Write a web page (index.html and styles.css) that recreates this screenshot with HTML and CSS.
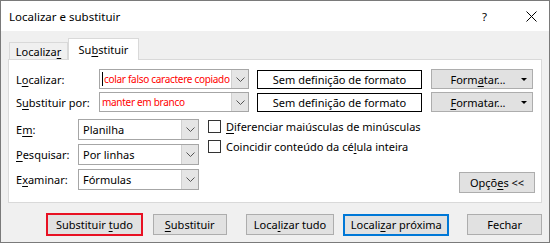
FILE: index.html
```html
<!DOCTYPE html>
<html lang="pt">
<head>
    <meta charset="UTF-8">
    <title>Localizar e substituir</title>
    <link rel="stylesheet" href="styles.css">
</head>
<body>
    <div class="window">
        <div class="titlebar">
            <span class="title">Localizar e substituir</span>
            <span class="help">?</span>
            <span class="close">
                <svg width="11" height="11" viewBox="0 0 11 11"><path d="M0.5 0.5 L10.5 10.5 M10.5 0.5 L0.5 10.5" stroke="#000" stroke-width="1" fill="none"/></svg>
            </span>
        </div>
        <div class="dialog-body">
            <div class="tabs">
                <div class="tab"><span>Localiza<u>r</u></span></div>
                <div class="tab active"><span>Su<u>b</u>stituir</span></div>
            </div>
            <div class="panel">
                <div class="find-row">
                    <label class="row-label">L<u>o</u>calizar:</label>
                    <div class="combo">
                        <span class="combo-text"><span class="caret"></span>colar falso caractere copiado</span>
                        <span class="combo-btn"><svg width="9" height="5" viewBox="0 0 9 5"><polyline points="0.5,0.5 4.5,4.5 8.5,0.5" stroke="#555" fill="none"/></svg></span>
                    </div>
                    <div class="format-box">Sem definição de formato</div>
                    <div class="btn format-btn"><span>Form<u>a</u>tar...</span><span class="tri"></span></div>
                </div>
                <div class="find-row">
                    <label class="row-label">S<u>u</u>bstituir por:</label>
                    <div class="combo">
                        <span class="combo-text">manter em branco</span>
                        <span class="combo-btn"><svg width="9" height="5" viewBox="0 0 9 5"><polyline points="0.5,0.5 4.5,4.5 8.5,0.5" stroke="#555" fill="none"/></svg></span>
                    </div>
                    <div class="format-box">Sem definição de formato</div>
                    <div class="btn format-btn"><span><u>F</u>ormatar...</span><span class="tri"></span></div>
                </div>
                <div class="options">
                    <div class="selects">
                        <div class="select-row">
                            <label class="sel-label">E<u>m</u>:</label>
                            <div class="select"><span class="select-text">Planilha</span><span class="select-btn"><svg width="9" height="5" viewBox="0 0 9 5"><polyline points="0.5,0.5 4.5,4.5 8.5,0.5" stroke="#555" fill="none"/></svg></span></div>
                        </div>
                        <div class="select-row">
                            <label class="sel-label"><u>P</u>esquisar:</label>
                            <div class="select"><span class="select-text">Por linhas</span><span class="select-btn"><svg width="9" height="5" viewBox="0 0 9 5"><polyline points="0.5,0.5 4.5,4.5 8.5,0.5" stroke="#555" fill="none"/></svg></span></div>
                        </div>
                        <div class="select-row">
                            <label class="sel-label">E<u>x</u>aminar:</label>
                            <div class="select"><span class="select-text">Fórmulas</span><span class="select-btn"><svg width="9" height="5" viewBox="0 0 9 5"><polyline points="0.5,0.5 4.5,4.5 8.5,0.5" stroke="#555" fill="none"/></svg></span></div>
                        </div>
                    </div>
                    <div class="checks">
                        <div class="check"><span class="box"></span><span><u>D</u>iferenciar maiúsculas de minúsculas</span></div>
                        <div class="check"><span class="box"></span><span>Coincidir conteúdo da cé<u>l</u>ula inteira</span></div>
                        <div class="btn options-btn"><span>Opçõ<u>e</u>s &lt;&lt;</span></div>
                    </div>
                </div>
            </div>
            <div class="actions">
                <div class="btn act replace-all"><span>Substituir <u>t</u>udo</span></div>
                <div class="btn act replace"><span><u>S</u>ubstituir</span></div>
                <div class="btn act find-all"><span>Loca<u>l</u>izar tudo</span></div>
                <div class="btn act find-next"><span>Locali<u>z</u>ar próxima</span></div>
                <div class="btn act close-btn"><span>Fechar</span></div>
            </div>
        </div>
    </div>
</body>
</html>
```

FILE: styles.css
```css
body {
    margin: 0;
    font-family: "Noto Sans", sans-serif;
    font-size: 11px;
    color: #000;
}

u {
    text-decoration-thickness: 1px;
    text-underline-offset: 2px;
}

.window {
    width: 548px;
    height: 241px;
    border: 1px solid #7a7a7a;
    background-color: #f0f0f0;
}

.titlebar {
    height: 30px;
    background-color: #fff;
    display: flex;
    align-items: center;
    font-size: 11.5px;
}

.title {
    margin-left: 8px;
    flex: 1;
}

.help {
    width: 12px;
    margin-right: 32px;
}

.close {
    display: flex;
    margin-right: 12px;
}

.dialog-body {
    padding: 7px 7px 0 7px;
}

.tabs {
    display: flex;
    align-items: flex-end;
    height: 21px;
    margin-left: 1px;
}

.tab {
    box-sizing: border-box;
    width: 59px;
    height: 17px;
    line-height: 17px;
    text-align: center;
    border: 1px solid #d9d9d9;
    border-bottom: none;
    background-color: #f0f0f0;
    white-space: nowrap;
}

.tab.active {
    width: 71px;
    height: 22px;
    line-height: 21px;
    background-color: #fff;
    margin-bottom: -1px;
    position: relative;
}

.panel {
    height: 133px;
    border: 1px solid #d9d9d9;
    background-color: #fff;
    padding: 9px 6px 0 7px;
}

.find-row {
    display: flex;
    align-items: center;
    height: 20px;
    margin-bottom: 3px;
}

.row-label {
    width: 83px;
}

.combo {
    width: 148px;
    height: 18px;
    border: 1px solid #a6a6a6;
    display: flex;
    align-items: center;
    margin-right: 8px;
}

.combo-text {
    flex: 1;
    color: #f00;
    font-size: 10px;
    letter-spacing: -0.3px;
    padding-left: 2px;
    display: flex;
    align-items: center;
    white-space: nowrap;
    overflow: hidden;
}

.caret {
    width: 1px;
    height: 14px;
    background-color: #000;
    margin-right: 1px;
}

.combo-btn,
.select-btn {
    width: 16px;
    height: 100%;
    background-color: #e5e5e5;
    border-left: 1px solid #d0d0d0;
    display: flex;
    align-items: center;
    justify-content: center;
}

.format-box {
    width: 163px;
    height: 17px;
    border: 1.5px solid #000;
    display: flex;
    align-items: center;
    justify-content: center;
    margin-right: 9px;
}

.btn {
    background-color: #e1e1e1;
    border: 1px solid #adadad;
    display: flex;
    align-items: center;
    justify-content: center;
    box-sizing: border-box;
    white-space: nowrap;
}

.format-btn {
    width: 102px;
    height: 20px;
    position: relative;
    padding-right: 8px;
}

.tri {
    position: absolute;
    right: 5px;
    top: 8px;
    border-left: 3px solid transparent;
    border-right: 3px solid transparent;
    border-top: 3px solid #000;
}

.options {
    display: flex;
    margin-top: 7px;
}

.selects {
    width: 183px;
}

.select-row {
    display: flex;
    align-items: center;
    height: 21px;
    margin-bottom: 4px;
}

.sel-label {
    width: 62px;
}

.select {
    width: 119px;
    height: 19px;
    border: 1px solid #a6a6a6;
    display: flex;
    align-items: center;
}

.select-text {
    flex: 1;
    padding-left: 4px;
}

.checks {
    flex: 1;
    display: flex;
    flex-direction: column;
    padding-left: 9px;
    padding-top: 1px;
}

.check {
    display: flex;
    align-items: center;
    height: 13px;
    margin-bottom: 7px;
}

.box {
    width: 11px;
    height: 11px;
    border: 1px solid #333;
    background-color: #fff;
    margin-right: 5px;
}

.options-btn {
    align-self: flex-end;
    width: 76px;
    height: 21px;
    margin-top: 12px;
}

.actions {
    display: flex;
    align-items: center;
    margin-top: 10px;
    padding-left: 38px;
}

.act {
    height: 21px;
}

.replace-all {
    width: 97px;
    height: 23px;
    border: 2px solid #e81123;
    margin-right: 10px;
}

.replace {
    width: 74px;
    margin-right: 19px;
}

.find-all {
    width: 89px;
    margin-right: 9px;
}

.find-next {
    width: 106px;
    height: 22px;
    border: 2px solid #0078d7;
    margin-right: 18px;
}

.close-btn {
    width: 75px;
}
```
